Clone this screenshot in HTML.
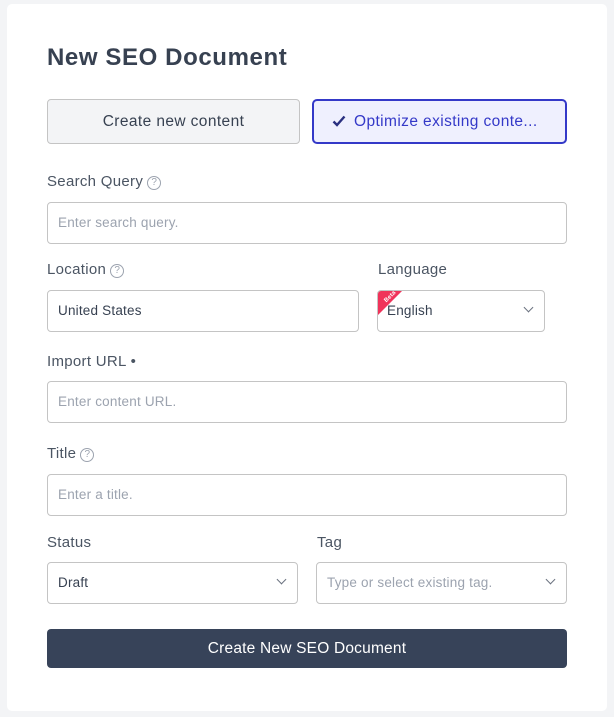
<!DOCTYPE html>
<html><head><style>
*{box-sizing:border-box;margin:0;padding:0}
body{width:614px;height:717px;background:#f3f4f6;font-family:"Liberation Sans",sans-serif;position:relative;overflow:hidden}
.card{position:absolute;left:7px;top:4px;width:600px;height:707px;background:#fff;border-radius:5px}
.a{position:absolute}
h1{position:absolute;left:47px;top:44px;font-size:24px;font-weight:bold;color:#374151;letter-spacing:0.6px}
.lbl{position:absolute;font-size:15px;color:#4b5563;letter-spacing:0.3px}
.q{display:inline-block;width:14px;height:14px;border:1px solid #9ca3af;border-radius:50%;font-size:10px;line-height:12px;text-align:center;color:#9ca3af;vertical-align:1px;margin-left:4px;letter-spacing:0}
.in{position:absolute;height:42px;border:1px solid #c4c4c4;border-radius:4px;font-size:13.5px;color:#9ca3af;padding-left:10px;line-height:40px;background:#fff;overflow:hidden;letter-spacing:0.2px}
.dark{color:#374151}
.chev{position:absolute;right:12px;top:13px;width:7px;height:7px;border-right:1.3px solid #6b7280;border-bottom:1.3px solid #6b7280;transform:rotate(45deg)}
</style></head><body>
<div class="card"></div>
<h1>New SEO Document</h1>
<div class="a" style="left:47px;top:99px;width:253px;height:45px;background:#f3f4f6;border:1px solid #c4c4c4;border-radius:4px;font-size:15.5px;color:#374151;text-align:center;line-height:43px;letter-spacing:0.4px">Create new content</div>
<div class="a" style="left:312px;top:99px;width:255px;height:45px;background:#eff0fe;border:2px solid #3439c8;border-radius:5px;font-size:15.5px;color:#3439c8;line-height:41px;padding-left:40px;letter-spacing:0.4px;white-space:nowrap"><svg class="a" style="left:18px;top:14px" width="14" height="12" viewBox="0 0 14 12"><path d="M1.5 6.5L5 10L12.5 1.5" fill="none" stroke="#2a3080" stroke-width="2.4"/></svg>Optimize existing conte...</div>
<div class="lbl" style="left:47px;top:173px">Search Query<span class="q">?</span></div>
<div class="in" style="left:47px;top:202px;width:520px">Enter search query.</div>
<div class="lbl" style="left:47px;top:261px">Location<span class="q">?</span></div>
<div class="in dark" style="left:47px;top:290px;width:312px">United States</div>
<div class="lbl" style="left:378px;top:261px">Language</div>
<div class="in dark" style="left:377px;top:290px;width:168px;padding-left:9px">English<div class="chev"></div>
<svg class="a" style="left:0;top:0" width="26" height="26"><path d="M0 0H24L0 24Z" fill="#f0335a"/><text x="6" y="10" font-size="6" fill="#fff" font-weight="bold" transform="rotate(-45 9 8)">Beta</text></svg></div>
<div class="lbl" style="left:47px;top:353px">Import URL •</div>
<div class="in" style="left:47px;top:381px;width:520px">Enter content URL.</div>
<div class="lbl" style="left:47px;top:445px">Title<span class="q">?</span></div>
<div class="in" style="left:47px;top:474px;width:520px">Enter a title.</div>
<div class="lbl" style="left:47px;top:534px">Status</div>
<div class="in dark" style="left:47px;top:562px;width:251px">Draft<div class="chev"></div></div>
<div class="lbl" style="left:317px;top:534px">Tag</div>
<div class="in" style="left:316px;top:562px;width:251px">Type or select existing tag.<div class="chev"></div></div>
<div class="a" style="left:47px;top:629px;width:520px;height:39px;background:#374359;border-radius:4px;color:#fff;font-size:15.5px;text-align:center;line-height:39px;letter-spacing:0.2px">Create New SEO Document</div>
</body></html>
